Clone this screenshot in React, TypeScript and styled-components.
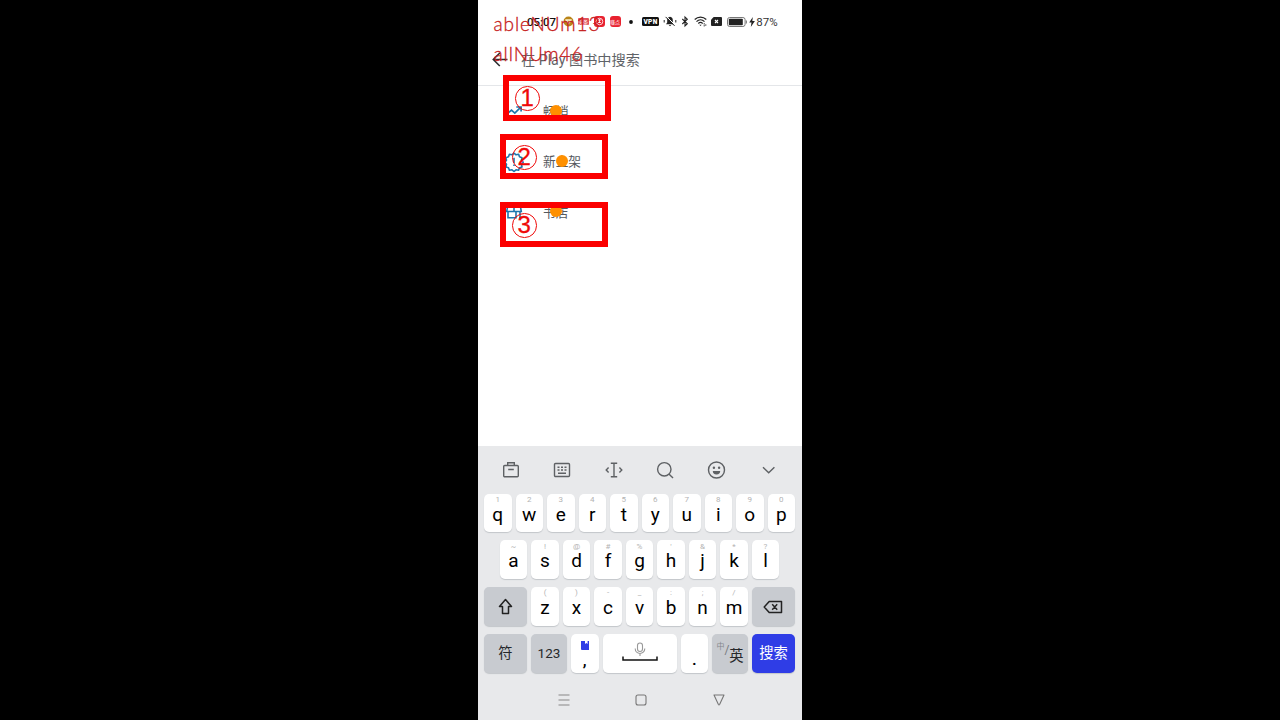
import React from "react";
import styled, { createGlobalStyle } from "styled-components";

const sans = `Roboto, "Noto Sans CJK SC", sans-serif`;

const GlobalStyle = createGlobalStyle`
  * { box-sizing: border-box; }
  body { margin: 0; background: #000; font-family: ${sans}; }
  svg { display: block; flex: none; overflow: visible; }
`;

const Stage = styled.div`
  width: 1280px;
  height: 720px;
  display: flex;
  justify-content: center;
  background: #000;
  overflow: hidden;
`;

const Phone = styled.main`
  position: relative;
  width: 324px;
  height: 720px;
  display: flex;
  flex-direction: column;
  background: #fff;
`;

const StatusBar = styled.header`
  height: 42px;
  padding: 1px 0 0 49.5px;
  display: flex;
  align-items: center;
  color: #111;
`;

const Slot = styled.span<{ $w: number; $gap?: number }>`
  width: ${(p) => p.$w}px;
  margin-left: ${(p) => p.$gap ?? 0}px;
  flex: none;
  display: flex;
  justify-content: center;
  white-space: nowrap;
`;

const Clock = styled(Slot)`
  font-size: 11.5px;
  line-height: 14px;
  font-weight: 500;
`;

const Percent = styled(Slot)`
  padding-top: 1px;
  font-size: 11.5px;
  line-height: 14px;
  color: #333;
`;

const AppBadge = styled(Slot)`
  height: 11px;
  border-radius: 3px;
  align-items: center;
  background: #e8222f;
  color: #fff;
  font-size: 5px;
  line-height: 8px;
`;

const FlatBadge = styled(AppBadge)`
  height: 7px;
  border-radius: 1px;
  background: #e2505a;
`;

const Vpn = styled(Slot)`
  height: 9px;
  border-radius: 1.5px;
  align-items: center;
  background: #111;
  color: #fff;
  font-size: 6.5px;
  font-weight: 900;
  letter-spacing: 0.3px;
`;

const SearchBar = styled.div`
  height: 44px;
  padding: 0 0 8px 13px;
  display: flex;
  align-items: center;
  gap: 13px;
  border-bottom: 1px solid #e4e6e9;
`;

const Hint = styled.span`
  padding-top: 1px;
  font-size: 14.2px;
  line-height: 20px;
  color: #5f6368;
`;

const Suggestions = styled.section`
  flex: 1;
`;

const Suggestion = styled.div`
  height: 50.5px;
  padding-left: 27px;
  display: flex;
  align-items: center;
  gap: 20px;
  font-size: 12.7px;
  line-height: 18px;
  color: #55595e;
`;

const SuggestionText = styled.span`
  padding-top: 1px;
`;

const Keyboard = styled.section`
  height: 274px;
  background: #e8e9eb;
  display: flex;
  flex-direction: column;
`;

const Tools = styled.div`
  height: 47.6px;
  padding: 0 8px 0 7px;
  display: flex;
`;

const Tool = styled.div`
  flex: 1;
  display: flex;
  align-items: center;
  justify-content: center;
`;

const Rows = styled.div`
  display: flex;
  flex-direction: column;
  gap: 8px;
  padding-right: 1px;
`;

const KeyRow = styled.div`
  display: flex;
  justify-content: center;
  gap: 4px;
  height: 38.8px;
`;

const Key = styled.div<{ $w?: number; $tone?: "plain" | "grey" | "blue" }>`
  width: ${(p) => p.$w ?? 27.5}px;
  flex: none;
  display: flex;
  flex-direction: column;
  align-items: center;
  border-radius: 5px;
  box-shadow: 0 1px 1px #c3c6ca;
  background: ${(p) => (p.$tone === "grey" ? "#c8cbd0" : p.$tone === "blue" ? "#2f3de6" : "#fff")};
  color: ${(p) => (p.$tone === "blue" ? "#fff" : "#000")};
`;

const WideKey = styled(Key)`
  justify-content: center;
  font-size: 14.3px;
  line-height: 20px;
  color: ${(p) => (p.$tone === "blue" ? "#fff" : "#26282b")};
`;

const DigitsKey = styled(WideKey)`
  font-size: 13.5px;
`;

const KeyHint = styled.span`
  height: 10px;
  padding-top: 1.3px;
  font-size: 8px;
  line-height: 10px;
  color: #b3b3b3;
`;

const Letter = styled.span`
  font-size: 19px;
  line-height: 21px;
`;

const Comma = styled.span`
  font-size: 17px;
  line-height: 18px;
  font-weight: 500;
`;

const Stop = styled(Comma)`
  padding-top: 16px;
`;

const BookWrap = styled.div`
  padding: 7px 0 1px;
`;

const LangKey = styled(WideKey)`
  flex-direction: row;
  gap: 0;
`;

const Minor = styled.span`
  font-size: 8px;
  line-height: 10px;
  padding-bottom: 13px;
  color: #85898e;
`;

const Slash = styled.span`
  font-size: 12px;
  padding-bottom: 6px;
  color: #777b80;
`;

const Major = styled.span`
  padding-top: 5px;
`;

const NavBar = styled.nav`
  flex: 1;
  display: flex;
  align-items: center;
  padding: 8px 0 0 47.3px;
`;

const NavItem = styled.div`
  width: 77.4px;
  display: flex;
  justify-content: center;
`;

const Watermark = styled.div<{ $y: number; $track: number }>`
  position: absolute;
  left: 15.5px;
  top: ${(p) => p.$y}px;
  font-family: Lato, sans-serif;
  font-weight: 300;
  font-size: 19px;
  line-height: 22px;
  letter-spacing: ${(p) => p.$track}px;
  color: #c62020;
  -webkit-text-stroke: 0.3px #c62020;
  white-space: nowrap;
`;

const Mark = styled.div<{ $x: number; $y: number; $h: number }>`
  position: absolute;
  left: ${(p) => p.$x}px;
  top: ${(p) => p.$y}px;
  width: 108px;
  height: ${(p) => p.$h}px;
  padding: 5px 6px;
  border: 6px solid #fb0000;
`;

const MarkNumber = styled.div`
  width: 24.5px;
  height: 24.5px;
  display: flex;
  align-items: center;
  justify-content: center;
  border: 1.3px solid #ef0808;
  border-radius: 50%;
  font-family: "Liberation Sans", Arial, sans-serif;
  font-size: 24px;
  line-height: 24px;
  color: #ef0808;
  -webkit-text-stroke: 0.3px #ef0808;
`;

const Dot = styled.div<{ $x: number; $y: number }>`
  position: absolute;
  left: ${(p) => p.$x - 6}px;
  top: ${(p) => p.$y - 6}px;
  width: 12px;
  height: 12px;
  border-radius: 50%;
  background: #ff9000;
`;

const stroke = { fill: "none", stroke: "#5e6164", strokeWidth: 1.4 } as const;

const topRow = "qwertyuiop".split("").map((c, i) => [c, String((i + 1) % 10)]);
const midRow = [["a", "~"], ["s", "!"], ["d", "@"], ["f", "#"], ["g", "%"], ["h", "'"], ["j", "&"], ["k", "*"], ["l", "?"]];
const lowRow = [["z", "("], ["x", ")"], ["c", "-"], ["v", "_"], ["b", ":"], ["n", ";"], ["m", "/"]];

const letters = (row: string[][]) =>
  row.map(([c, h]) => (
    <Key key={c}>
      <KeyHint>{h}</KeyHint>
      <Letter>{c}</Letter>
    </Key>
  ));

export default function App() {
  return (
    <Stage>
      <GlobalStyle />
      <Phone>
        <StatusBar>
          <Clock $w={28}>05:07</Clock>
          <Slot $w={11} $gap={7}>
            <svg width="11" height="11" viewBox="0 0 11 11">
              <circle cx="5.5" cy="5.5" r="5" fill="#b98418" />
              <path d="M2.3 4h6.4M3 4l2.5 3.5L8 4" fill="none" stroke="#fff4cf" strokeWidth="1.3" />
            </svg>
          </Slot>
          <FlatBadge $w={11} $gap={4}>头条</FlatBadge>
          <AppBadge $w={11} $gap={5}>
            <svg width="9" height="9" viewBox="0 0 9 9" fill="none" stroke="#fff">
              <circle cx="4.5" cy="4.5" r="3.3" strokeWidth=".8" />
              <path d="M3 3h3M4.5 2v4M3 5.5h3" strokeWidth=".8" />
            </svg>
          </AppBadge>
          <AppBadge $w={11} $gap={5}>赚点</AppBadge>
          <Slot $w={4} $gap={8}>
            <svg width="4" height="4"><circle cx="2" cy="2" r="1.9" fill="#111" /></svg>
          </Slot>
          <Vpn $w={17} $gap={9.5}>VPN</Vpn>
          <Slot $w={14} $gap={3.5}>
            <svg width="14" height="11" viewBox="0 0 14 11">
              <path d="M7 .7C4.8 1 4.2 2.5 4.2 4.2V6.5L3 8.2h8L9.8 6.500V4.200C9.800 2.500 9.200 1 7 .7zM5.800 9h2.400L7 10.300z" fill="#222" />
              <path d="M3.400 .4l9 9" stroke="#fff" strokeWidth="1" />
              <path d="M2.600 .9l9 9M1.200 4v2.500M12.800 4v2.500" stroke="#222" strokeWidth="1" fill="none" />
            </svg>
          </Slot>
          <Slot $w={8} $gap={4}>
            <svg width="8" height="11" viewBox="0 0 8 11">
              <path d="M1.300 3l5 4.700L4 10V1l2.300 2.200-5 4.800" fill="none" stroke="#222" strokeWidth="1.100" />
            </svg>
          </Slot>
          <Slot $w={13} $gap={5}>
            <svg width="13" height="11" viewBox="0 0 13 11">
              <path d="M.7 3.500c3.300-3.200 8.300-3.200 11.600 0M2.500 5.600c2.300-2.200 5.700-2.200 8 0M4.300 7.500c1.300-1.200 3.100-1.200 4.400 0" fill="none" stroke="#222" strokeWidth="1.200" />
              <path d="M5.300 8.700h2.400L6.500 10z" fill="#222" />
              <path d="M10.200 7.200v1.300M10.200 9.200v1.200M11.800 8.400v1.300" stroke="#222" strokeWidth="1" />
            </svg>
          </Slot>
          <Slot $w={11} $gap={4}>
            <svg width="11" height="9" viewBox="0 0 11 9">
              <path d="M2.700 0H10a1 1 0 0 1 1 1v7a1 1 0 0 1-1 1H1a1 1 0 0 1-1-1V2.700z" fill="#222" />
              <path d="M4 3l3 3M7 3L4 6" stroke="#fff" strokeWidth="1.100" />
            </svg>
          </Slot>
          <Slot $w={20} $gap={5}>
            <svg width="20" height="10" viewBox="0 0 20 10">
              <rect x=".5" y=".5" width="17.600" height="9" rx="2.200" fill="none" stroke="#777" />
              <rect x="1.800" y="1.800" width="14" height="6.400" rx=".8" fill="#222" />
              <path d="M19.400 3.500v3" stroke="#777" />
            </svg>
          </Slot>
          <Slot $w={6} $gap={2}>
            <svg width="6" height="10" viewBox="0 0 6 10">
              <path d="M3.800 0L.2 5.500h2.300L1.800 10 5.900 4H3.300z" fill="#222" />
            </svg>
          </Slot>
          <Percent $w={23} $gap={1}>87%</Percent>
        </StatusBar>

        <SearchBar>
          <svg width="17" height="16" viewBox="0 0 17 16" fill="none" stroke="#2c2e31" strokeWidth="1.600">
            <path d="M16.500 7.500H2.500M8.800 1L2.300 7.500l6.500 6.500" />
          </svg>
          <Hint>在 Play 图书中搜索</Hint>
        </SearchBar>

        <Suggestions>
          <Suggestion>
            <svg width="18" height="18" viewBox="0 0 18 18" fill="none" stroke="#1d76ad" strokeWidth="1.700">
              <path d="M1.500 12.500l5-4.300 3.300 2.900 6-6M11.300 5h4.800v4.600" />
            </svg>
            <SuggestionText>畅销</SuggestionText>
          </Suggestion>
          <Suggestion>
            <svg width="18" height="18" viewBox="0 0 18 18" fill="none" stroke="#1d76ad" strokeWidth="1.600" strokeLinejoin="round">
              <path d="M9 .6l2 1.700 2.600-.5 .9 2.500 2.500.9-.5 2.600 1.700 2-1.700 2 .5 2.600-2.500.9-.9 2.500-2.600-.5-2 1.700-2-1.700-2.600.5-.9-2.500-2.500-.9.5-2.600-1.700-2 1.700-2-.5-2.600 2.500-.9.900-2.500 2.600.5z" transform="translate(0 -.5)" />
              <path d="M9 4.800v5.200M9 11.500v1.600" />
            </svg>
            <SuggestionText>新上架</SuggestionText>
          </Suggestion>
          <Suggestion>
            <svg width="18" height="18" viewBox="0 0 18 18" fill="none" stroke="#1d76ad" strokeWidth="1.600">
              <path d="M2.500 4h13l.8 4.500H1.700zM3 8.500v6.300h8V8.500M15 8.500v7M9 4v4.500" />
            </svg>
            <SuggestionText>书店</SuggestionText>
          </Suggestion>
        </Suggestions>

        <Keyboard>
          <Tools>
            <Tool>
              <svg width="18" height="18" viewBox="0 0 18 18" {...stroke}>
                <rect x="1.700" y="4.500" width="14.600" height="11.300" rx="1" />
                <path d="M5.700 4.500V1.800h6.600v2.700M6.200 8.500h5.600" />
              </svg>
            </Tool>
            <Tool>
              <svg width="18" height="18" viewBox="0 0 18 18" {...stroke}>
                <rect x="1.500" y="2.500" width="15" height="13" rx="1" />
                <path d="M4.500 6.200h2M8 6.200h2M11.500 6.200h2M4.500 9h2M8 9h2M11.500 9h2M5 12.200h8" />
              </svg>
            </Tool>
            <Tool>
              <svg width="18" height="18" viewBox="0 0 18 18" {...stroke}>
                <path d="M5.800 2.200h6.400M5.800 15.800h6.400M9 2.200v13.600M3.600 6.500L1.200 9l2.400 2.500M14.400 6.500L16.800 9l-2.400 2.500" />
              </svg>
            </Tool>
            <Tool>
              <svg width="18" height="18" viewBox="0 0 18 18" {...stroke}>
                <circle cx="8.300" cy="8.300" r="6.700" />
                <path d="M12.900 12.900l4.100 4.100" />
              </svg>
            </Tool>
            <Tool>
              <svg width="18" height="18" viewBox="0 0 18 18" {...stroke}>
                <circle cx="8.500" cy="9" r="8" />
                <path d="M4.800 10h7.400a3.700 3.400 0 0 1-7.400 0z" fill="#5e6164" stroke="none" />
                <circle cx="5.900" cy="6.800" r="1.200" fill="#5e6164" stroke="none" />
                <circle cx="11.100" cy="6.800" r="1.200" fill="#5e6164" stroke="none" />
              </svg>
            </Tool>
            <Tool>
              <svg width="18" height="18" viewBox="0 0 18 18" {...stroke}>
                <path d="M4 6.300l5.700 5.500 5.700-5.500" />
              </svg>
            </Tool>
          </Tools>

          <Rows>
            <KeyRow>{letters(topRow)}</KeyRow>
            <KeyRow>{letters(midRow)}</KeyRow>
            <KeyRow>
              <WideKey $w={43} $tone="grey">
                <svg width="15" height="17" viewBox="0 0 15 17" fill="none" stroke="#222" strokeWidth="1.500" strokeLinejoin="round">
                  <path d="M7.500 1.500L1.500 8.500h3v7h6v-7h3z" />
                </svg>
              </WideKey>
              {letters(lowRow)}
              <WideKey $w={43} $tone="grey">
                <svg width="20" height="14" viewBox="0 0 20 14" fill="none" stroke="#222" strokeWidth="1.500" strokeLinejoin="round">
                  <path d="M6.200 1.500H18.500v11H6.200L1.200 7zM9.200 4.300l5 5.400M14.200 4.300l-5 5.400" />
                </svg>
              </WideKey>
            </KeyRow>
            <KeyRow>
              <WideKey $w={43} $tone="grey">符</WideKey>
              <DigitsKey $w={36} $tone="grey">123</DigitsKey>
              <Key>
                <BookWrap>
                  <svg width="8" height="9" viewBox="0 0 8 9">
                    <path d="M0 0h4v3l1.300-1L6.600 3V0H8v9H1a1 1 0 0 1-1-1z" fill="#2f3de6" />
                  </svg>
                </BookWrap>
                <Comma>,</Comma>
              </Key>
              <WideKey $w={74}>
                <svg width="36" height="22" viewBox="0 0 36 22" fill="none">
                  <rect x="15.500" y="1" width="5" height="8.500" rx="2.500" stroke="#999" strokeWidth="1.100" />
                  <path d="M13.200 6.500c0 6.600 9.600 6.600 9.600 0M18 11.500v2.500" stroke="#999" strokeWidth="1.100" />
                  <path d="M1 14.500v3.500h34v-3.500" stroke="#111" strokeWidth="1.500" />
                </svg>
              </WideKey>
              <Key>
                <Stop>.</Stop>
              </Key>
              <LangKey $w={36} $tone="grey">
                <Minor>中</Minor>
                <Slash>/</Slash>
                <Major>英</Major>
              </LangKey>
              <WideKey $w={43} $tone="blue">搜索</WideKey>
            </KeyRow>
          </Rows>

          <NavBar>
            <NavItem>
              <svg width="12" height="12" viewBox="0 0 12 12" fill="none" stroke="#888" strokeWidth="1.100">
                <path d="M.5 1h11M.5 6h11M.5 11h11" />
              </svg>
            </NavItem>
            <NavItem>
              <svg width="12" height="12" viewBox="0 0 12 12" fill="none" stroke="#777" strokeWidth="1.100">
                <rect x="1" y="1" width="10" height="10" rx="2" />
              </svg>
            </NavItem>
            <NavItem>
              <svg width="12" height="12" viewBox="0 0 12 12" fill="none" stroke="#777" strokeWidth="1.100" strokeLinejoin="round">
                <path d="M1 1h10L6.700 10.300q-.7 1.200-1.400 0z" />
              </svg>
            </NavItem>
          </NavBar>
        </Keyboard>

        <Dot $x={78} $y={111} />
        <Dot $x={84} $y={161} />
        <Dot $x={78} $y={211} />
        <Mark $x={25} $y={75} $h={46}><MarkNumber>1</MarkNumber></Mark>
        <Mark $x={22} $y={134} $h={45}><MarkNumber>2</MarkNumber></Mark>
        <Mark $x={22} $y={202} $h={45}><MarkNumber>3</MarkNumber></Mark>
        <Watermark $y={13} $track={0.9}>ableNUm13</Watermark>
        <Watermark $y={43} $track={0.9}>allNUm46</Watermark>
      </Phone>
    </Stage>
  );
}
